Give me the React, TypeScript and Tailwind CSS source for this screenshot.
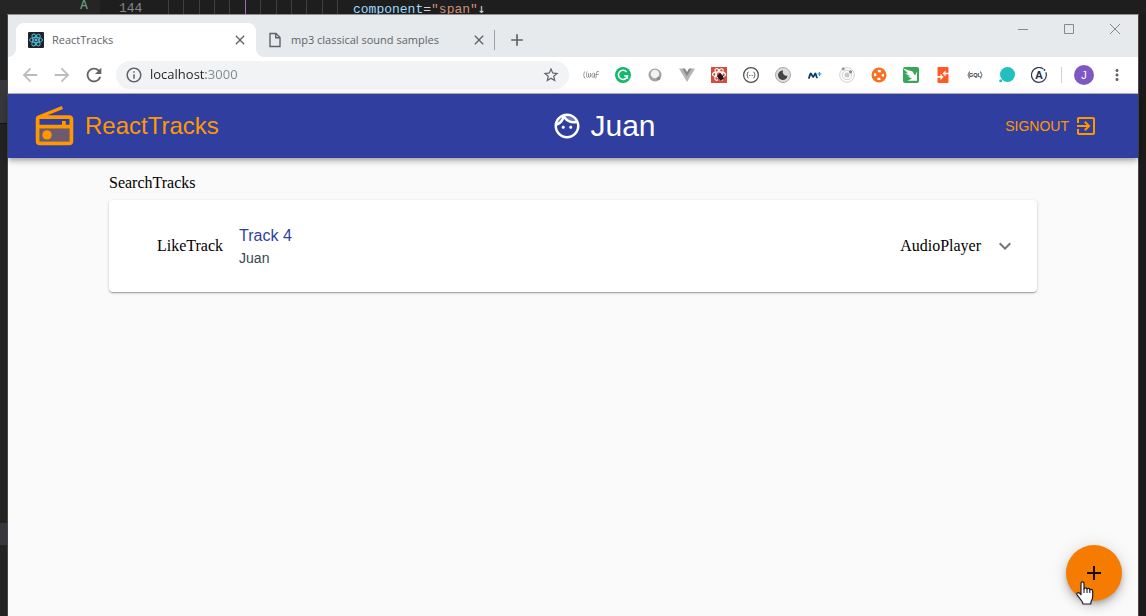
import React from "react";
import {
  MdAdd,
  MdArrowBack,
  MdArrowForward,
  MdClose,
  MdExpandMore,
  MdInfoOutline,
  MdMoreVert,
  MdRefresh,
  MdStarBorder,
} from "react-icons/md";

const indentGuides = [0, 1, 2, 3, 4, 5, 6, 7, 8, 9, 10, 11];

function CodeStrip() {
  return (
    <div className="flex h-[14px] overflow-hidden bg-[#1e1e1e] font-['Liberation_Mono',monospace] text-[13px] leading-[18px]">
      <div className="w-[100px] shrink-0 bg-[#252526] pl-20 font-['Open_Sans',sans-serif] text-[12px] leading-[9px] font-semibold text-[#6a9a78]">
        A
      </div>
      <span className="w-[68px] shrink-0 pl-[19px] text-[#858585]">144</span>
      <div className="mr-[15px] flex w-[170px] shrink-0 justify-between">
        {indentGuides.map((n) => (
          <span key={n} className={n === 5 ? "w-px bg-[#a868b4]" : "w-px bg-[#404040]"} />
        ))}
      </div>
      <code className="font-['Liberation_Mono',monospace] whitespace-pre">
        <span className="text-[#9cdcfe]">component</span>
        <span className="text-[#d4d4d4]">=</span>
        <span className="text-[#ce9178]">"span"</span>
        <span className="font-['DejaVu_Sans_Mono',monospace] text-[#d4d4d4]">↓</span>
      </code>
    </div>
  );
}

function ReactFavicon() {
  return (
    <svg viewBox="0 0 16 16" className="size-4">
      <rect width="16" height="16" rx="1" fill="#20232a" />
      <g fill="none" stroke="#53c1de" strokeWidth="0.9">
        <ellipse cx="8" cy="8" rx="6.6" ry="2.6" />
        <ellipse cx="8" cy="8" rx="6.6" ry="2.6" transform="rotate(60 8 8)" />
        <ellipse cx="8" cy="8" rx="6.6" ry="2.6" transform="rotate(120 8 8)" />
      </g>
      <circle cx="8" cy="8" r="1.4" fill="#53c1de" />
    </svg>
  );
}

function TabStrip() {
  return (
    <div className="flex h-[42px] items-end bg-[#e7eaed] pl-2 font-['Open_Sans',sans-serif] text-[11px] text-[#5f6368]">
      <div className="relative flex h-[34px] w-60 items-center rounded-t-lg bg-white pr-2 pl-3">
        <svg viewBox="0 0 8 8" className="absolute bottom-0 -left-2 size-2">
          <path d="M8 0v8H0a8 8 0 0 0 8-8z" fill="#fff" />
        </svg>
        <svg viewBox="0 0 8 8" className="absolute -right-2 bottom-0 size-2">
          <path d="M0 0v8h8a8 8 0 0 1-8-8z" fill="#fff" />
        </svg>
        <ReactFavicon />
        <span className="ml-2 grow">ReactTracks</span>
        <button type="button" aria-label="Close tab">
          <MdClose className="size-4" />
        </button>
      </div>
      <div className="flex h-[34px] w-[238px] items-center pr-[7px] pl-3">
        <svg viewBox="0 0 14 16" className="h-4 w-[14px]" fill="none" stroke="#5f6368" strokeWidth="1.4">
          <path d="M2 1.5h6l4 4v9H2zM7.7 1.8v4h4" />
        </svg>
        <span className="ml-[9px] grow">mp3 classical sound samples</span>
        <button type="button" aria-label="Close tab">
          <MdClose className="size-4" />
        </button>
      </div>
      <div className="flex h-[34px] grow items-center">
        <span className="h-5 w-px bg-[#9aa0a6]" />
        <button type="button" aria-label="New tab" className="ml-3">
          <MdAdd className="size-5" />
        </button>
      </div>
      <div className="flex h-full items-start gap-9 pt-[9px] pr-[18px] text-[#85898c]">
        <button type="button" aria-label="Minimize">
          <svg viewBox="0 0 10 10" className="size-[10px]" stroke="currentColor">
            <path d="M0 5.5h10" />
          </svg>
        </button>
        <button type="button" aria-label="Maximize">
          <svg viewBox="0 0 10 10" className="size-[10px]" fill="none" stroke="currentColor">
            <path d="M.5.5h9v9h-9z" />
          </svg>
        </button>
        <button type="button" aria-label="Close window">
          <svg viewBox="0 0 10 10" className="size-[10px]" stroke="currentColor">
            <path d="M0 0l10 10M10 0L0 10" />
          </svg>
        </button>
      </div>
    </div>
  );
}

const extensions: { name: string; art: React.ReactNode }[] = [
  {
    name: "Sketch",
    art: (
      <g fill="none" stroke="#8c8c8c" strokeWidth="0.9">
        <path d="M2 4.500C.5 5 1.500 7.500.4 8 1.500 8.500.8 11.500 2.300 11.500M4 4.500c-1 3-.5 6 .5 6s1.500-2 1-4c0 2 .3 4 1.200 4s1.300-2 .8-4.500M10.500 6c-2 0-2 4.500-.5 4.500s1.500-4.500 1.500-4.500v4.500M12.500 11.500c1-1 .5-5 1.500-7h1.800M12.500 7.500h3" />
      </g>
    ),
  },
  {
    name: "Grammar",
    art: (
      <>
        <circle cx="8" cy="8" r="8" fill="#15b76c" />
        <path d="M11.600 4.900A4.600 4.600 0 1 0 12.500 9H9.300M12.400 8.800v3" fill="none" stroke="#fff" strokeWidth="1.500" />
      </>
    ),
  },
  {
    name: "Lens",
    art: (
      <>
        <circle cx="8" cy="8" r="6.500" fill="#a3a3a3" />
        <circle cx="8" cy="7" r="4.300" fill="#f2f2f2" />
        <circle cx="11.500" cy="11.500" r="1.800" fill="#8b8b8b" />
      </>
    ),
  },
  {
    name: "Vue",
    art: (
      <>
        <path d="M0 1.500h4L8 8.500l4-7h4L8 15z" fill="#b5b5b5" />
        <path d="M3.500 1.500H6l2 3.400 2-3.400h2.500L8 9.300z" fill="#858585" />
      </>
    ),
  },
  {
    name: "React debug",
    art: (
      <>
        <rect width="16" height="16" fill="#d84b40" />
        <g fill="none" stroke="#fff" strokeWidth="1.100">
          <ellipse cx="8" cy="7.500" rx="6.500" ry="2.600" />
          <ellipse cx="8" cy="7.500" rx="6.500" ry="2.600" transform="rotate(60 8 7.500)" />
          <ellipse cx="8" cy="7.500" rx="6.500" ry="2.600" transform="rotate(120 8 7.500)" />
        </g>
        <ellipse cx="9.500" cy="10" rx="2.600" ry="3.300" fill="#2b1513" transform="rotate(-30 9.500 10)" />
        <path d="M6 9l7 3M7 12.500l5.500-4M9 6l1 8" stroke="#2b1513" />
      </>
    ),
  },
  {
    name: "JSON",
    art: (
      <g fill="none" stroke="#4a4a4a">
        <circle cx="8" cy="8" r="7.400" strokeWidth="1.200" />
        <path d="M5.500 5C4 5 5 7.500 3.700 8 5 8.500 4 11 5.500 11M10.500 5c1.500 0 .5 2.500 1.800 3-1.300.5-.3 3-1.800 3M6.300 8.500h1M8.700 8.500h1" />
      </g>
    ),
  },
  {
    name: "Dark mode",
    art: (
      <>
        <circle cx="8" cy="8" r="7.500" fill="#dcdcdc" stroke="#aaa" />
        <path d="M8 3.500a3.800 3.800 0 0 0 4.600 5A4.800 4.800 0 1 1 8 3.500z" fill="#444" />
      </>
    ),
  },
  {
    name: "M plus",
    art: (
      <>
        <path d="M2 11c.6-2 1.200-4.500 1.800-4.500S5.500 10 6.200 10s1.500-3.500 2.200-3.500S9.200 10 10 10.500" fill="none" stroke="#0c3a66" strokeWidth="1.800" strokeLinecap="round" />
        <path d="M12.500 5v4M10.500 7h4" stroke="#1a9ad6" strokeWidth="1.200" />
      </>
    ),
  },
  {
    name: "Orbit",
    art: (
      <>
        <circle cx="8" cy="8" r="7.300" fill="none" stroke="#d0d0d0" />
        <circle cx="8" cy="8" r="4.700" fill="none" stroke="#d0d0d0" />
        <circle cx="8" cy="8" r="2.500" fill="#c8c8c8" />
        <circle cx="4.200" cy="1.800" r="1.600" fill="#999" />
        <circle cx="11.500" cy="4.800" r="1.600" fill="#888" />
      </>
    ),
  },
  {
    name: "Support",
    art: (
      <>
        <circle cx="8" cy="8" r="7.500" fill="#f57224" />
        <circle cx="8" cy="8" r="3.900" fill="none" stroke="#fff" strokeWidth="2.200" strokeDasharray="3.126 3" strokeDashoffset="1.563" />
      </>
    ),
  },
  {
    name: "Arrow",
    art: (
      <>
        <rect width="16" height="16" rx="2" fill="#3aa65c" />
        <path d="M0 1.500l9.500 3 2.500 4L14 4.500v9.300H4.500l4.500-2.300L4.500 9.500l3-.3L2 6.500l3-.3z" fill="#fff" />
      </>
    ),
  },
  {
    name: "Swap",
    art: (
      <>
        <rect x="2.500" width="11" height="16" rx="1" fill="#ff5a26" />
        <path d="M14 5.800h-3.500V3.500L7.500 6.500l3 3V7.300H14zM2 9h3.500V6.700l3 3.300-3 3v-2.300H2z" fill="#fff" />
      </>
    ),
  },
  {
    name: "GraphQL",
    art: (
      <>
        <g fill="none" stroke="#555">
          <path d="M3 4.500C1.500 4.500 2.500 7.500.7 8c1.800.5.8 3.500 2.300 3.500M13 4.500c1.500 0 .5 3 2.300 3.500-1.800.5-.8 3.500-2.300 3.500" />
        </g>
        <text x="8" y="10.200" fontSize="5.500" fontWeight="700" textAnchor="middle" fill="#333">
          GQL
        </text>
      </>
    ),
  },
  {
    name: "Chat",
    art: (
      <>
        <circle cx="8.500" cy="7.500" r="7.500" fill="#22bfc0" />
        <circle cx="1.700" cy="13.800" r="1.500" fill="#22bfc0" />
      </>
    ),
  },
  {
    name: "Apollo",
    art: (
      <>
        <path d="M14.800 5.200A7.400 7.400 0 1 1 12.500 2.100" fill="none" stroke="#2b3a5c" strokeWidth="1.200" />
        <circle cx="13.500" cy="3" r="0.900" fill="#2b3a5c" />
        <text x="8" y="11.800" fontSize="11" fontWeight="700" textAnchor="middle" fill="#1f2f54">
          A
        </text>
      </>
    ),
  },
];

function Toolbar() {
  return (
    <div className="flex h-9 items-center bg-white pr-3 pl-[11px] text-[#5f6368]">
      <div className="flex gap-[10px]">
        <button type="button" aria-label="Back" className="text-[#babcbe]">
          <MdArrowBack className="size-[22px]" />
        </button>
        <button type="button" aria-label="Forward" className="text-[#babcbe]">
          <MdArrowForward className="size-[22px]" />
        </button>
        <button type="button" aria-label="Reload">
          <MdRefresh className="size-[22px]" />
        </button>
      </div>
      <div className="ml-[11px] flex h-7 min-w-0 grow items-center rounded-full bg-[#f1f3f4] px-[9px]">
        <MdInfoOutline className="size-[18px] shrink-0" />
        <input
          aria-label="Address"
          defaultValue="localhost:3000"
          className="ml-[7px] min-w-0 grow bg-[linear-gradient(90deg,#202124_56px,#80868b_56px)] bg-clip-text font-['Open_Sans',sans-serif] text-[13px] text-transparent outline-none"
        />
        <button type="button" aria-label="Bookmark">
          <MdStarBorder className="size-[18px]" />
        </button>
      </div>
      <div className="ml-[14px] flex gap-4">
        {extensions.map((ext) => (
          <button key={ext.name} type="button" aria-label={ext.name}>
            <svg viewBox="0 0 16 16" className="size-4 font-['Liberation_Sans',sans-serif]">
              {ext.art}
            </svg>
          </button>
        ))}
      </div>
      <span className="ml-[14px] h-4 w-px bg-[#cfd1d4]" />
      <button
        type="button"
        aria-label="Profile"
        className="ml-3 size-5 rounded-full bg-[#7e57c2] font-['Liberation_Sans',sans-serif] text-[11px] leading-5 text-white"
      >
        J
      </button>
      <button type="button" aria-label="Menu" className="ml-[14px]">
        <MdMoreVert className="size-[18px]" />
      </button>
    </div>
  );
}

function RadioIcon() {
  return (
    <svg viewBox="0 0 24 24" className="size-[45px]" fill="currentColor">
      <path opacity=".3" d="M4 20h16v-7H4v7z" />
      <path d="M2 20c0 1.100.89 2 2 2h16c1.110 0 2-.9 2-2V8c0-1.110-.89-2-2-2H8.300l8.260-3.340L15.880 1 3.240 6.150C2.510 6.430 2 7.170 2 8v12zM4 8h16v3h-2V9h-2v2H4V8zm0 5h16v7H4v-7z" />
      <circle cx="8" cy="16.480" r="2.500" />
    </svg>
  );
}

function FaceIcon() {
  return (
    <svg viewBox="0 0 24 24" className="size-[30px]" fill="currentColor">
      <path
        opacity=".3"
        d="M17.500 8c.46 0 .91-.05 1.340-.12C17.440 5.560 14.900 4 12 4c-.46 0-.91.05-1.340.12C12.060 6.440 14.600 8 17.500 8zM8.080 5.030C6.370 6 5.050 7.580 4.420 9.470c1.710-.97 3.030-2.550 3.660-4.440z"
      />
      <path d="M10.250 13c0 .69-.56 1.250-1.250 1.250S7.750 13.690 7.750 13s.56-1.250 1.250-1.250 1.250.56 1.250 1.250zM15 11.750c-.69 0-1.250.56-1.250 1.250s.56 1.250 1.250 1.250 1.250-.56 1.250-1.250-.56-1.250-1.250-1.250zm7 .25c0 5.520-4.480 10-10 10S2 17.520 2 12 6.480 2 12 2s10 4.480 10 10zM10.660 4.120C12.060 6.440 14.600 8 17.500 8c.46 0 .91-.05 1.340-.12C17.440 5.560 14.900 4 12 4c-.46 0-.91.05-1.340.12zM4.420 9.470c1.710-.97 3.030-2.550 3.660-4.440C6.370 6 5.050 7.580 4.420 9.470zM20 12c0-.78-.12-1.530-.33-2.240-.7.15-1.420.24-2.170.24-3.130 0-5.920-1.440-7.760-3.690C8.690 8.870 6.600 10.880 4 11.860c.01.04 0 .09 0 .14 0 4.410 3.590 8 8 8s8-3.590 8-8z" />
    </svg>
  );
}

function ExitIcon() {
  return (
    <svg viewBox="0 0 24 24" className="size-6" fill="currentColor">
      <path d="M19 3H5c-1.110 0-2 .9-2 2v4h2V5h14v14H5v-4H3v4c0 1.100.89 2 2 2h14c1.100 0 2-.9 2-2V5c0-1.100-.9-2-2-2zm-8.920 12.590L11.500 17l5-5-5-5-1.410 1.410L12.670 11H3v2h9.670l-2.580 2.590z" />
    </svg>
  );
}

function HandCursor() {
  return (
    <svg viewBox="0 0 18 24" className="pointer-events-none absolute top-9 left-[10px] h-6 w-[18px]">
      <path
        d="M5 2.500C5 1.400 5.700.8 6.500.8S8 1.400 8 2.500V8c.2-.8.8-1.200 1.500-1.200.9 0 1.500.6 1.500 1.500.3-.6.8-.9 1.400-.9.8 0 1.400.6 1.400 1.500.3-.4.7-.6 1.200-.6 1 0 1.700.7 1.700 1.700v5.500c0 2-.7 3-1.300 4.200-.4.9-.6 1.700-.6 3.300H7c-.2-1.500-1-2.700-2-4L1.300 14.200c-.7-1-.6-1.800 0-2.300.8-.6 1.700-.3 2.400.4L5 13.700z"
        fill="#fff"
        stroke="#1b1b2b"
        strokeWidth="1.200"
        strokeLinejoin="round"
      />
      <path d="M8 7.500V12M11 8.500V12M13.800 9v3" stroke="#1b1b2b" strokeWidth="1.100" />
    </svg>
  );
}

function AppHeader() {
  return (
    <header className="relative flex h-16 items-center justify-between bg-[#303f9f] px-6 text-[#ff9800] shadow-[0_2px_4px_-1px_rgba(0,0,0,0.2),0_4px_5px_0_rgba(0,0,0,0.14),0_1px_10px_0_rgba(0,0,0,0.12)]">
      <a href="#home" className="flex items-center gap-2">
        <RadioIcon />
        <h1 className="text-[24px] leading-8">ReactTracks</h1>
      </a>
      <a href="#profile" className="flex items-center gap-2 text-white">
        <FaceIcon />
        <span className="text-[30px] leading-10">Juan</span>
      </a>
      <button type="button" className="flex items-center gap-[5px] px-4 py-1 text-[14px] leading-6">
        SIGNOUT
        <ExitIcon />
      </button>
    </header>
  );
}

export default function App() {
  return (
    <div className="flex min-h-screen flex-col bg-[#1e1e1e]">
      <CodeStrip />
      <div className="flex grow">
        <div className="flex w-[7px] shrink-0 flex-col bg-[#232324]">
          <span className="mt-[66px] h-11 border-b border-[#111] bg-[#37373d]" />
          <span className="mt-[399px] h-[22px] bg-[#37373d]" />
        </div>
        <div className="relative flex min-w-0 grow flex-col border-x border-t border-x-[#484848] border-t-[#8f8f8f] bg-[#fafafa]">
          <TabStrip />
          <Toolbar />
          <div className="h-px bg-[#b8b8ba]" />
          <div className="font-['Liberation_Sans',Arial,sans-serif]">
            <AppHeader />
            <main className="mx-auto max-w-[960px] px-4 pt-4 font-['Liberation_Serif',serif] text-base text-black">
              <div className="leading-[18px]">SearchTracks</div>
              <ul className="py-2">
                <li className="flex items-center rounded-[4px] bg-white py-6 pr-5 pl-12 shadow-[0_1px_3px_0_rgba(0,0,0,0.2),0_1px_1px_0_rgba(0,0,0,0.14),0_2px_1px_-1px_rgba(0,0,0,0.12)]">
                  <span>LikeTrack</span>
                  <div className="ml-4 grow font-['Liberation_Sans',Arial,sans-serif]">
                    <h2 className="text-[16px] leading-6 text-[#303f9f]">Track 4</h2>
                    <a href="#juan" className="block text-[14px] leading-5 text-[#37474f]">
                      Juan
                    </a>
                  </div>
                  <span>AudioPlayer</span>
                  <button type="button" aria-label="Show details" className="ml-3 text-[#757575]">
                    <MdExpandMore className="size-6" />
                  </button>
                </li>
              </ul>
            </main>
          </div>
          <div className="absolute right-4 bottom-[15px]">
            <button
              type="button"
              aria-label="Add track"
              className="flex size-14 items-center justify-center rounded-full bg-[#f57c00] text-black/90 shadow-[0_3px_5px_-1px_rgba(0,0,0,0.2),0_6px_10px_0_rgba(0,0,0,0.14),0_1px_18px_0_rgba(0,0,0,0.12)]"
            >
              <MdAdd className="size-6" />
            </button>
            <HandCursor />
          </div>
        </div>
        <div className="w-[7px] shrink-0 bg-[#1b1b1b]" />
      </div>
    </div>
  );
}
